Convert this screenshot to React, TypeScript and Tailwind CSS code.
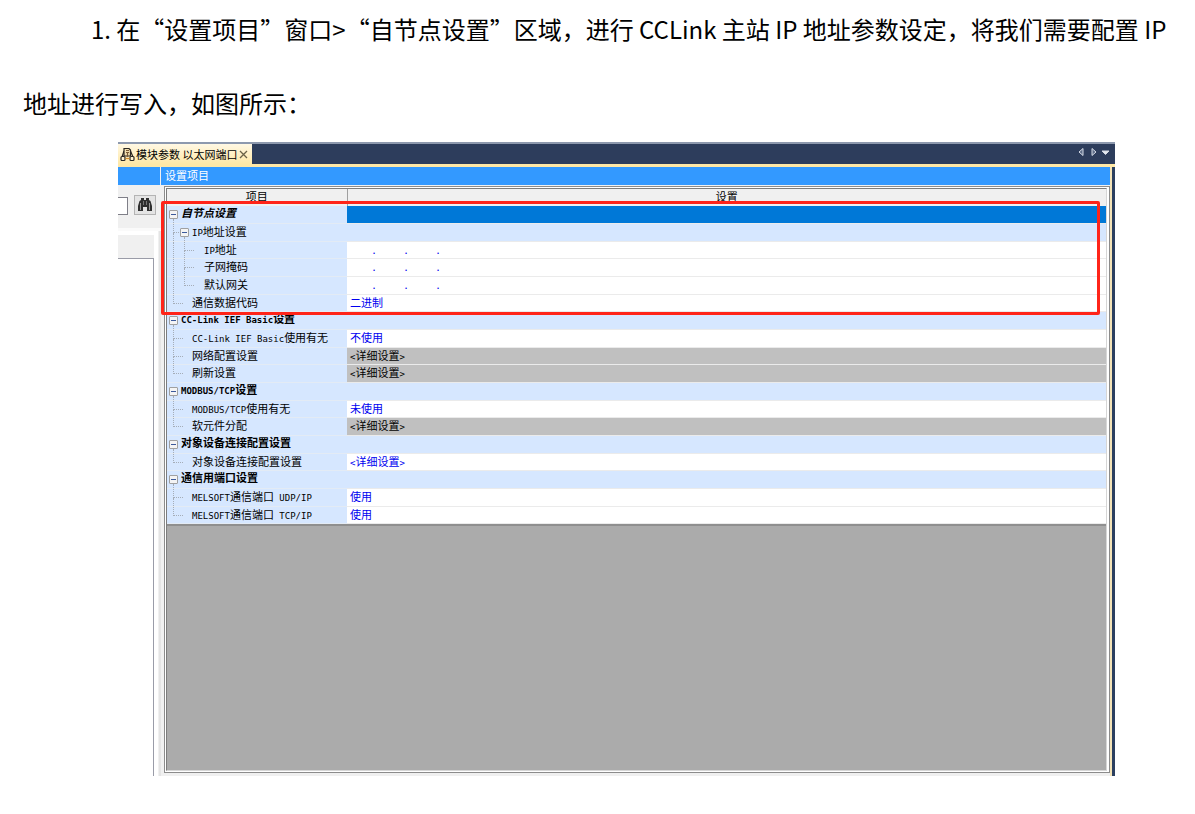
import { useState } from "react";

type Kind = "group" | "sub" | "ip" | "select" | "detail";

interface Row {
  label: string;
  kind: Kind;
  level: 0 | 1 | 2;
  value?: string;
  last?: boolean;
  disabled?: boolean;
}

const ROWS: Row[] = [
  { label: "自节点设置", kind: "group", level: 0 },
  { label: "IP地址设置", kind: "sub", level: 1 },
  { label: "IP地址", kind: "ip", level: 2 },
  { label: "子网掩码", kind: "ip", level: 2 },
  { label: "默认网关", kind: "ip", level: 2, last: true },
  { label: "通信数据代码", kind: "select", level: 1, value: "二进制", last: true },
  { label: "CC-Link IEF Basic设置", kind: "group", level: 0 },
  { label: "CC-Link IEF Basic使用有无", kind: "select", level: 1, value: "不使用" },
  { label: "网络配置设置", kind: "detail", level: 1, value: "<详细设置>", disabled: true },
  { label: "刷新设置", kind: "detail", level: 1, value: "<详细设置>", disabled: true, last: true },
  { label: "MODBUS/TCP设置", kind: "group", level: 0 },
  { label: "MODBUS/TCP使用有无", kind: "select", level: 1, value: "未使用" },
  { label: "软元件分配", kind: "detail", level: 1, value: "<详细设置>", disabled: true, last: true },
  { label: "对象设备连接配置设置", kind: "group", level: 0 },
  { label: "对象设备连接配置设置", kind: "detail", level: 1, value: "<详细设置>", last: true },
  { label: "通信用端口设置", kind: "group", level: 0 },
  { label: "MELSOFT通信端口 UDP/IP", kind: "select", level: 1, value: "使用" },
  { label: "MELSOFT通信端口 TCP/IP", kind: "select", level: 1, value: "使用", last: true },
];

export default function App() {
  const [selected, setSelected] = useState(0);

  return (
    <main className="bg-white font-['Noto_Sans_CJK_SC',sans-serif] text-black">
      <p className="-mt-2 pl-[23px] pr-5 indent-[68px] text-2xl leading-[74px]">
        1. 在“设置项目”窗口&gt;“自节点设置”区域，进行 CCLink 主站 IP
        地址参数设定，将我们需要配置 IP 地址进行写入，如图所示：
      </p>

      <section className="ml-[118px] mr-20 mt-0.5 border-t-2 border-[#8d99ae] text-[11px] leading-4">
        <TabBar />

        <div className="flex border-r-3 border-[#2b3f60]">
          <SidePane />

          {/* settings pane */}
          <div className="min-w-0 flex-1 border-r-2 border-[#f3e3b8] bg-[#f0f0f0] pb-[3px]">
            <h2 className="h-[18px] bg-[#3399ff] pl-1 leading-4 text-white">设置项目</h2>
            <div className="relative ml-[3px] mt-px border border-[#8c8c8c] bg-white p-px pr-0.5">
              <div className="border border-b-[#d6d6d6] border-l-[#7d7d7d] border-r-[#d6d6d6] border-t-[#7d7d7d] bg-[#ababab]">
                <table className="w-full table-fixed border-collapse">
                  <colgroup>
                    <col className="w-[180px]" />
                    <col />
                  </colgroup>
                  <thead>
                    <tr className="bg-[#f0f0f0] leading-3">
                      <th className="h-[17px] border-r border-[#a0a0a0] p-0 pb-1 font-normal">项目</th>
                      <th className="h-[17px] p-0 pb-1 font-normal">设置</th>
                    </tr>
                  </thead>
                  <tbody>
                    {ROWS.map((row, i) => (
                      <tr key={i} className="leading-[14px]" onClick={() => setSelected(i)}>
                        <th className="bg-[#d6e7ff] p-0 text-left font-normal">
                          <div
                            className={`flex border-b border-[#e3ebf5] ${i % 3 === 2 ? "h-[17px]" : "h-[18px]"}`}
                          >
                            <Tree row={row} />
                            <span
                              className={`whitespace-pre ${row.kind === "group" ? "-mt-px font-bold" : ""} ${
                                i === selected && row.kind === "group" ? "italic" : ""
                              }`}
                            >
                              <Mixed text={row.label} />
                            </span>
                          </div>
                        </th>
                        <td className="p-0">
                          <div
                            className={`flex border-b border-[#ebebeb] ${
                              i % 3 === 2 ? "h-[17px]" : "h-[18px]"
                            } ${cellColor(row, i === selected)}`}
                          >
                            <Value row={row} />
                          </div>
                        </td>
                      </tr>
                    ))}
                  </tbody>
                </table>
                <div className="h-[246px] border-t-2 border-[#8f8f8f]" />
              </div>

              {/* highlighted area */}
              <div className="pointer-events-none absolute -left-1 right-[9px] top-[14px] h-[114px] rounded-xs border-3 border-[#ff2419]" />
            </div>
          </div>
        </div>
      </section>
    </main>
  );
}

function cellColor(row: Row, active: boolean) {
  if (active && row.kind === "group") return "bg-[#0078d7]";
  if (row.kind === "group" || row.kind === "sub") return "bg-[#d6e7ff]";
  if (row.disabled) return "bg-[#c0c0c0]";
  return "bg-white";
}

/* half-width letters sit in a mono face, the rest in the CJK face */
function Mixed({ text }: { text: string }) {
  return (
    <>
      {text.split(/([\x20-\x7e]+)/).map((part, i) =>
        i % 2 ? (
          <span key={i} className="font-['DejaVu_Sans_Mono',monospace] text-[9px]">
            {part}
          </span>
        ) : (
          part
        ),
      )}
    </>
  );
}

function Tree({ row }: { row: Row }) {
  if (row.level === 0) {
    return (
      <span className="flex w-[14px] shrink-0 flex-col pl-0.5 pt-1">
        <Toggle label={row.label} />
        <span className="ml-1 flex-1 border-l border-dotted border-[#a5adb8]" />
      </span>
    );
  }
  if (row.kind === "sub") {
    return (
      <span className="flex w-[25px] shrink-0 pl-1.5">
        <Branch short />
        <span className="ml-px flex flex-col pt-1">
          <Toggle label={row.label} />
          <span className="ml-1 flex-1 border-l border-dotted border-[#a5adb8]" />
        </span>
      </span>
    );
  }
  if (row.level === 2) {
    return (
      <span className="flex w-[37px] shrink-0 pl-1.5">
        <span className="w-[11px] border-l border-dotted border-[#a5adb8]" />
        <Branch last={row.last} />
      </span>
    );
  }
  return (
    <span className="flex w-[25px] shrink-0 pl-1.5">
      <Branch last={row.last} />
    </span>
  );
}

function Branch({ last, short }: { last?: boolean; short?: boolean }) {
  return (
    <span className={`flex flex-col ${short ? "w-1.5" : "w-[10px]"}`}>
      <span className="flex-1 border-b border-l border-dotted border-[#a5adb8]" />
      <span className={`flex-1 border-dotted border-[#a5adb8] ${last ? "" : "border-l"}`} />
    </span>
  );
}

function Toggle({ label }: { label: string }) {
  return (
    <button
      type="button"
      aria-label={label}
      className="flex size-[9px] shrink-0 items-center justify-center rounded-[1px] border border-[#a0a0a0] bg-[#f4f4f4]"
    >
      <span className="h-px w-[5px] bg-[#3c5a9c]" />
    </button>
  );
}

function Value({ row }: { row: Row }) {
  if (row.kind === "ip") {
    return (
      <span className="flex items-start pl-0.5 text-[#0000f0]">
        {[0, 1, 2, 3].map((n) => (
          <span key={n} className="flex">
            <input
              type="text"
              maxLength={3}
              aria-label={`${row.label} ${n + 1}`}
              className={`h-3.5 bg-transparent text-right outline-none ${n === 0 ? "w-[23px]" : "w-7"}`}
            />
            {n < 3 && <span className="w-1 text-center">.</span>}
          </span>
        ))}
      </span>
    );
  }
  if (row.kind === "select") {
    return (
      <select
        aria-label={row.label}
        defaultValue={row.value}
        className="h-3.5 w-full appearance-none bg-transparent pl-[3px] leading-[14px] text-[#0000f0] outline-none"
      >
        <option>{row.value}</option>
      </select>
    );
  }
  if (row.kind === "detail") {
    return (
      <button
        type="button"
        disabled={row.disabled}
        className={`h-3.5 pl-[3px] text-left leading-[14px] ${row.disabled ? "text-black" : "text-[#0000f0]"}`}
      >
        <Mixed text={row.value ?? ""} />
      </button>
    );
  }
  return null;
}

function TabBar() {
  return (
    <div className="flex h-[23px] items-stretch border-b-3 border-[#ffe8a6] bg-[#2d3d5c]">
      <div className="flex w-[134px] items-center bg-linear-to-b from-[#fff8e4] to-[#ffe8a6] pl-0.5">
        <ModuleIcon />
        <span className="ml-px whitespace-nowrap">模块参数 以太网端口</span>
        <button type="button" aria-label="关闭" className="ml-0.5">
          <svg viewBox="0 0 9 9" className="size-[9px]" stroke="#6b6248" strokeWidth="1.3">
            <path d="M1 1l7 7M8 1l-7 7" />
          </svg>
        </button>
      </div>
      <svg viewBox="0 0 34 10" className="mb-1 ml-auto mr-1 w-[34px] self-center" fill="none" stroke="#d5dbe6">
        <path d="M6 1.500v7L2 5z" fill="#5d6c88" />
        <path d="M15 1.500v7L19 5z" fill="#5d6c88" />
        <path d="M25 4h7l-3.500 3.500z" fill="#e4e8ef" />
      </svg>
    </div>
  );
}

function SidePane() {
  return (
    <aside className="flex w-[43px] shrink-0 flex-col bg-[#f0f0f0]">
      <div className="mr-px h-[18px] bg-[#3399ff]" />
      <div className="flex h-[46px] items-start gap-1.5 border-b-3 border-[#fafafa] pt-[10px]">
        <input
          type="text"
          aria-label="搜索"
          className="mt-0.5 h-[18px] w-[10px] border border-l-0 border-[#7f7f88] bg-white outline-none"
        />
        <button
          type="button"
          aria-label="查找"
          className="flex h-5 w-[22px] items-center justify-center border border-[#b4b4b4] bg-[#e4e4e4]"
        >
          <BinocularsIcon />
        </button>
      </div>
      <div className="flex flex-1 border-r-2 border-[#e4e4e4]">
        <div className="flex w-9 flex-col border-t-4 border-white">
          <div className="h-[23px] bg-[#f0f0f0]" />
          <div className="flex-1 border-r border-t border-[#9a9ca8] bg-white" />
        </div>
        <div className="w-1 bg-white" />
      </div>
    </aside>
  );
}

function ModuleIcon() {
  return (
    <svg viewBox="0 0 15 15" className="size-[15px] shrink-0" fill="none" stroke="#2b2723" strokeWidth="1.200">
      <path d="M4 4L2 10M10.500 4l2.500 6" />
      <path d="M4 1.500h5l1.500 1.500v6H4z" fill="#f2dfae" />
      <path d="M6 3.500h3M6 5.500h3M7.500 6v4" stroke="#7b5a37" />
      <rect x="1" y="9.500" width="4" height="4" rx="1" fill="#fff3d0" />
      <rect x="10" y="9.500" width="4" height="4" rx="1" fill="#fff3d0" />
      <path d="M5.500 11.500h4" stroke="#d7902e" />
    </svg>
  );
}

function BinocularsIcon() {
  return (
    <svg viewBox="0 0 16 14" className="h-[14px] w-4" fill="#2f2f2f">
      <path d="M4 0h3v2h2V0h3v2l1.500 1L15 8v5h-5V9H6v4H1V8l1.500-5L4 2z" />
      <path d="M3.500 5v7M12.500 5v7" stroke="#9a9a9a" />
      <path d="M6.500 3v4M9.500 3v4" stroke="#777" />
    </svg>
  );
}
